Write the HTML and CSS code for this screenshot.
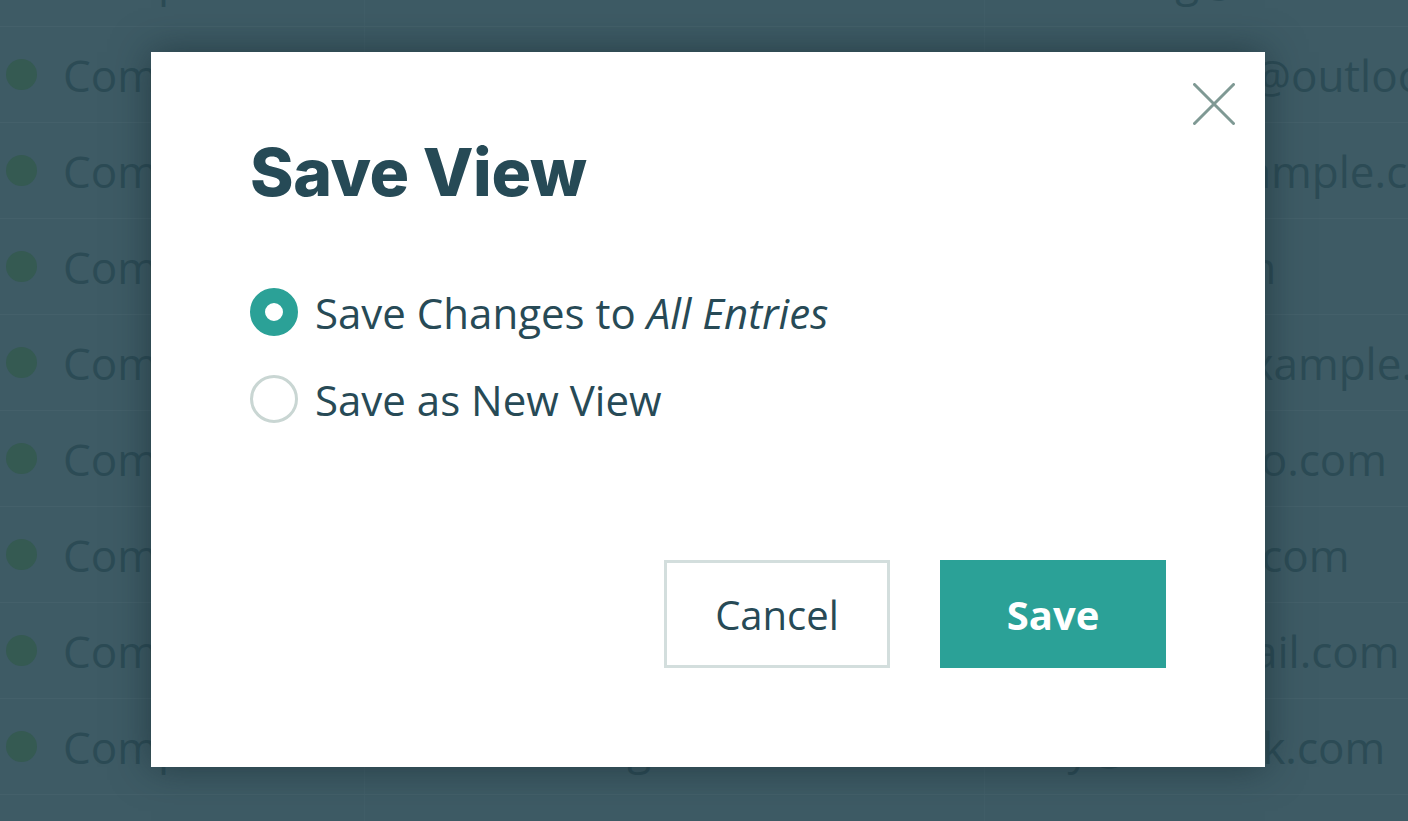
FILE: index.html
```html
<!DOCTYPE html>
<html lang="en">
<head>
<meta charset="utf-8">
<title>Save View</title>
<link rel="stylesheet" href="styles.css">
</head>
<body>
<div class="page">
  <div class="table">
    <div class="row"><div class="c1"><span class="dot"></span>Compass</div><div class="c2">Sales Director</div><div class="c3">william.g@outlook.com</div></div>
    <div class="row"><div class="c1"><span class="dot"></span>Compass</div><div class="c2">Account Lead</div><div class="c3">mia.cooper@outlook.com</div></div>
    <div class="row"><div class="c1"><span class="dot"></span>Compass</div><div class="c2">Sales Director</div><div class="c3">jade.m@example.com</div></div>
    <div class="row"><div class="c1"><span class="dot"></span>Compass</div><div class="c2">Office Admin</div><div class="c3">ed@me.com</div></div>
    <div class="row"><div class="c1"><span class="dot"></span>Compass</div><div class="c2">Account Lead</div><div class="c3">tim.hale@example.com</div></div>
    <div class="row"><div class="c1"><span class="dot"></span>Compass</div><div class="c2">Sales Director</div><div class="c3">ben.j@yahoo.com</div></div>
    <div class="row"><div class="c1"><span class="dot"></span>Compass</div><div class="c2">Office Admin</div><div class="c3">anna@mail.com</div></div>
    <div class="row"><div class="c1"><span class="dot"></span>Compass</div><div class="c2">Account Lead</div><div class="c3">mark.l@gmail.com</div></div>
    <div class="row"><div class="c1"><span class="dot"></span>Compass</div><div class="c2">Sales Manager</div><div class="c3">kay@outlook.com</div></div>
    <div class="row"><div class="c1"><span class="dot"></span>Compass</div><div class="c2">Sales Director</div><div class="c3">lisa.hall@mail.com</div></div>
  </div>

  <div class="modal">
    <button class="close" aria-label="Close">
      <svg width="42" height="42" viewBox="0 0 42 42"><path d="M1.5 1.5 L40.5 40.5 M40.5 1.5 L1.5 40.5" stroke="#7f9994" stroke-width="3" stroke-linecap="round" fill="none"/></svg>
    </button>
    <h1 class="title">Save View</h1>
    <div class="options">
      <label class="option">
        <span class="radio checked"></span>
        <span class="label">Save Changes to <em>All Entries</em></span>
      </label>
      <label class="option">
        <span class="radio"></span>
        <span class="label">Save as New View</span>
      </label>
    </div>
    <div class="actions">
      <button class="btn cancel">Cancel</button>
      <button class="btn save">Save</button>
    </div>
  </div>
</div>
</body>
</html>
```

FILE: styles.css
```css
* { box-sizing: border-box; }
html, body { margin: 0; padding: 0; }
body {
  width: 1408px;
  height: 821px;
  overflow: hidden;
  background: #3e5b65;
  font-family: "Open Sans", "Noto Sans", sans-serif;
}
.page {
  position: relative;
  width: 1408px;
  height: 821px;
  overflow: hidden;
}
.table {
  margin-top: -69px;
  display: flex;
  flex-direction: column;
}
.row {
  height: 96px;
  display: grid;
  grid-template-columns: 365px 620px 1fr;
  align-items: center;
  border-bottom: 1px solid rgba(255,255,255,0.035);
  color: #2c4b55;
  font-size: 44px;
  white-space: nowrap;
}
.c1 {
  display: flex;
  align-items: center;
  gap: 26px;
  padding-left: 6px;
  height: 100%;
  border-right: 1px solid rgba(255,255,255,0.02);
}
.c2 { padding-left: 30px; height: 100%; display: flex; align-items: center; border-right: 1px solid rgba(255,255,255,0.02); }
.c3 { padding-left: 35px; height: 100%; display: flex; align-items: center; }
.dot {
  width: 31px;
  height: 31px;
  border-radius: 50%;
  background: #355a52;
  flex: none;
}

.modal {
  position: absolute;
  left: 151px;
  top: 52px;
  width: 1114px;
  height: 715px;
  background: #ffffff;
  box-shadow: 0 0 36px rgba(20, 40, 46, 0.6);
  padding: 80px 99px 0 99px;
  display: flex;
  flex-direction: column;
}
.close {
  position: absolute;
  left: 1042px;
  top: 31px;
  width: 42px;
  height: 42px;
  padding: 0;
  border: 0;
  background: transparent;
  display: flex;
}
.title {
  margin: 0;
  font-family: "Inter", sans-serif;
  font-weight: 800;
  font-size: 66px;
  line-height: 80px;
  letter-spacing: -0.4px;
  color: #264a56;
}
.options {
  margin-top: 76px;
  display: flex;
  flex-direction: column;
  gap: 39px;
}
.option {
  display: flex;
  align-items: center;
  gap: 17px;
  height: 48px;
  color: #274a56;
  font-size: 42px;
}
.label em { font-style: italic; }
.radio {
  width: 48px;
  height: 48px;
  border-radius: 50%;
  border: 3px solid #c9d6d3;
  flex: none;
}
.radio.checked {
  border: 15px solid #2ba197;
  background: #ffffff;
}
.actions {
  margin-top: auto;
  margin-bottom: 99px;
  display: flex;
  justify-content: flex-end;
  gap: 50px;
}
.btn {
  width: 226px;
  height: 108px;
  font-family: "Open Sans", "Noto Sans", sans-serif;
  font-size: 40px;
  cursor: pointer;
}
.cancel {
  background: #ffffff;
  border: 3px solid #d3dedd;
  color: #274a56;
}
.save {
  background: #2ba197;
  border: 0;
  color: #ffffff;
  font-weight: 700;
}
```
